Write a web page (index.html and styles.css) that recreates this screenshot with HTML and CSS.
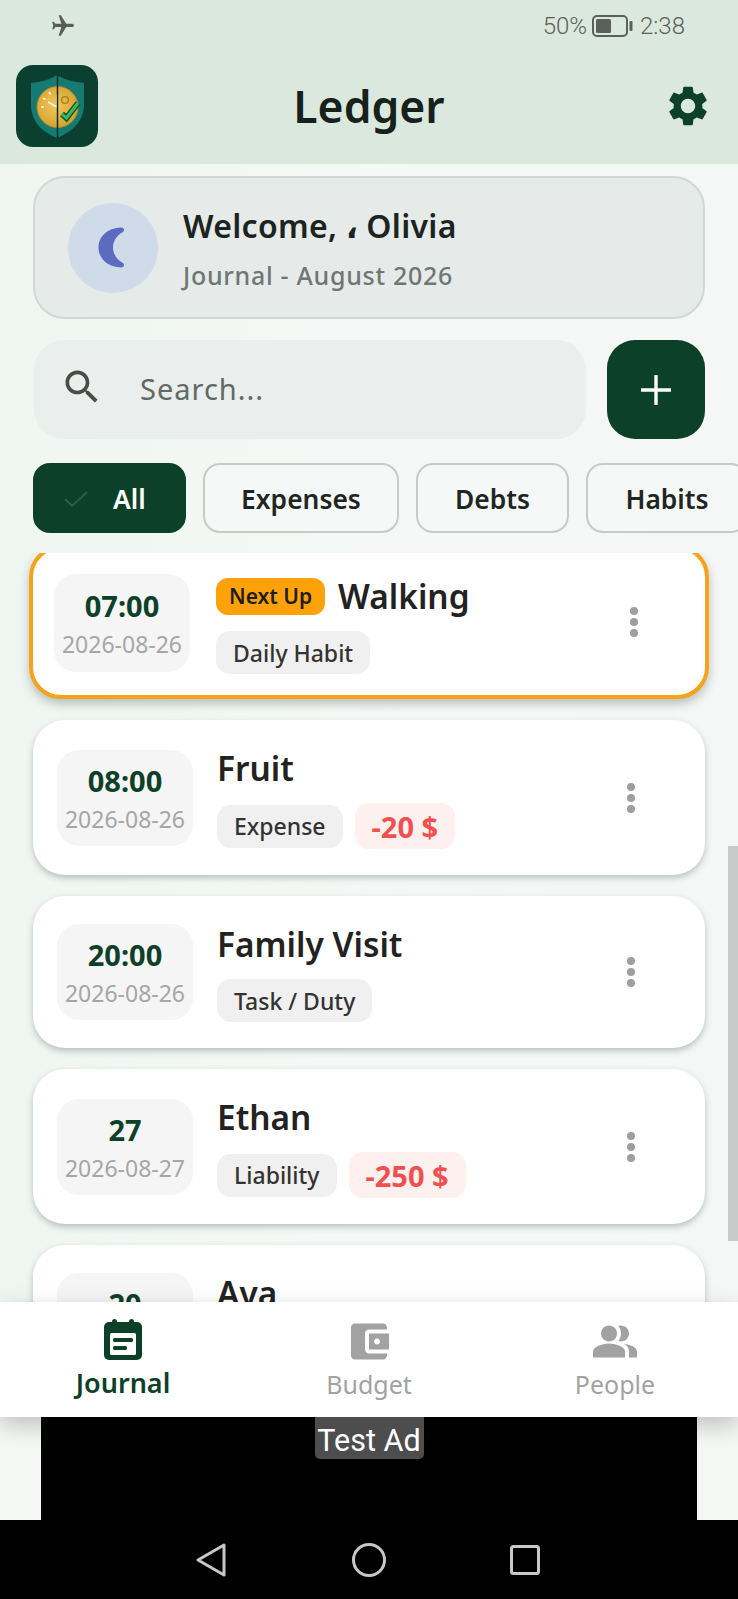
FILE: index.html
```html
<!DOCTYPE html>
<html lang="en">
<head>
<meta charset="utf-8">
<title>Ledger</title>
<link rel="stylesheet" href="styles.css">
</head>
<body>
<div class="app">
  <header class="top">
    <div class="status">
      <svg class="plane" viewBox="0 0 24 24"><path transform="rotate(90 12 12)" d="M21 16v-2l-8-5V3.5c0-.83-.67-1.5-1.5-1.5S10 2.67 10 3.5V9l-8 5v2l8-2.5V19l-2 1.5V22l3.5-1 3.5 1v-1.5L13 19v-5.5l8 2.5z"/></svg>
      <div class="status-right">
        <span>50%</span>
        <svg class="battery" viewBox="0 0 41 22"><rect x="1" y="1" width="34" height="20" rx="4" fill="none" stroke="#5b605c" stroke-width="2"/><rect x="4" y="4" width="15" height="14" rx="1.5" fill="#5b605c"/><rect x="37.5" y="6" width="3" height="10" rx="1" fill="#5b605c"/></svg>
        <span class="clock">2:38</span>
      </div>
    </div>
    <div class="appbar">
      <svg class="logo" viewBox="0 0 82 82">
        <defs>
          <radialGradient id="gold" cx="0.45" cy="0.45" r="0.6"><stop offset="0" stop-color="#f0c85a"/><stop offset="1" stop-color="#d39f2e"/></radialGradient>
        </defs>
        <rect width="82" height="82" rx="17" fill="#0b4030"/>
        <path d="M41 10 C49 15 58 17 68 18 V40 C68 56 56 67 41 73 C26 67 15 56 15 40 V18 C25 17 33 15 41 10 Z" fill="#147a72"/>
        <circle cx="41.5" cy="42" r="20.5" fill="url(#gold)" stroke="#b98a25" stroke-width="1"/>
        <path d="M32 37 L41 42 M25 42 h3 M27 33 l2.500 1.500 M33 27 l1.500 2.500" fill="none" stroke="#fff7df" stroke-width="1.500"/>
        <path d="M41 42 V30" fill="none" stroke="#fff7df" stroke-width="1"/>
        <circle cx="49" cy="35" r="3.400" fill="none" stroke="#a97d1a" stroke-width="1.400"/>
        <path d="M41.500 10 V73" stroke="#0a2d26" stroke-width="1.500"/>
        <path d="M46 49 L50.500 53 L62 38" fill="none" stroke="#0c5a34" stroke-width="6"/>
        <path d="M46 49 L50.500 53 L62 38" fill="none" stroke="#46b45a" stroke-width="3"/>
      </svg>
      <h1 class="title">Ledger</h1>
      <svg class="gear" viewBox="0 0 24 24"><path d="M19.14 12.94c.04-.3.06-.61.06-.94 0-.32-.02-.64-.07-.94l2.03-1.58c.18-.14.23-.41.12-.61l-1.92-3.32c-.12-.22-.37-.29-.59-.22l-2.39.96c-.5-.38-1.03-.7-1.62-.94l-.36-2.54c-.04-.24-.24-.41-.48-.41h-3.84c-.24 0-.43.17-.47.41l-.36 2.54c-.59.24-1.13.57-1.62.94l-2.39-.96c-.22-.08-.47 0-.59.22L2.74 8.87c-.12.21-.08.47.12.61l2.03 1.58c-.05.3-.09.63-.09.94s.02.64.07.94l-2.03 1.58c-.18.14-.23.41-.12.61l1.92 3.32c.12.22.37.29.59.22l2.39-.96c.5.38 1.03.7 1.62.94l.36 2.54c.05.24.24.41.48.41h3.84c.24 0 .44-.17.47-.41l.36-2.54c.59-.24 1.13-.56 1.62-.94l2.39.96c.22.08.47 0 .59-.22l1.92-3.32c.12-.22.07-.47-.12-.61l-2.01-1.58zM12 15.6c-1.98 0-3.6-1.62-3.6-3.6s1.62-3.6 3.6-3.6 3.6 1.62 3.6 3.6-1.62 3.6-3.6 3.6z"/></svg>
    </div>
  </header>

  <main class="main">
    <section class="welcome">
      <div class="avatar">
        <svg class="moon" viewBox="0 0 27 41"><path d="M23 .5 C9 1 .5 10 .5 20.500 C.5 31 9 40 23 40.500 C26 40.500 27 37.500 25 36 C19 33 15 27 15 20.500 C15 14 19 8 25 5 C27 3.500 26 .5 23 .5 Z"/></svg>
      </div>
      <div class="welcome-text">
        <div class="hello">Welcome, ، Olivia</div>
        <div class="period">Journal - August 2026</div>
      </div>
    </section>

    <section class="searchrow">
      <div class="search">
        <svg class="search-icon" viewBox="0 0 24 24"><path d="M15.5 14h-.79l-.28-.27C15.41 12.59 16 11.11 16 9.5 16 5.91 13.09 3 9.5 3S3 5.91 3 9.5 5.91 16 9.5 16c1.61 0 3.09-.59 4.23-1.57l.27.28v.79l5 4.99L20.49 19l-4.99-5zm-6 0C7.01 14 5 11.99 5 9.5S7.01 5 9.5 5 14 7.01 14 9.5 11.99 14 9.5 14z"/></svg>
        <span class="search-text">Search...</span>
      </div>
      <div class="add">
        <svg class="plus" viewBox="0 0 32 32"><path d="M16 1 V31 M1 16 H31" stroke="#fff" stroke-width="3.4"/></svg>
      </div>
    </section>

    <nav class="chips">
      <div class="chip chip-on">
        <svg class="tick" viewBox="0 0 24 16"><path d="M1 8 L8 15 L23 1" fill="none" stroke="#2f5c47" stroke-width="2"/></svg>
        <span>All</span>
      </div>
      <div class="chip chip-exp">Expenses</div>
      <div class="chip chip-debt">Debts</div>
      <div class="chip chip-hab">Habits</div>
    </nav>

    <section class="list">
      <article class="card card-next">
        <div class="when when-next"><div class="hour">07:00</div><div class="date">2026-08-26</div></div>
        <div class="info">
          <div class="name-row"><span class="badge">Next Up</span><span class="name">Walking</span></div>
          <div class="tags"><span class="tag">Daily Habit</span></div>
        </div>
        <div class="dots dots-next"><i></i><i></i><i></i></div>
      </article>

      <article class="card">
        <div class="when"><div class="hour">08:00</div><div class="date">2026-08-26</div></div>
        <div class="info">
          <div class="name-row"><span class="name">Fruit</span></div>
          <div class="tags"><span class="tag">Expense</span><span class="amount">-20 $</span></div>
        </div>
        <div class="dots"><i></i><i></i><i></i></div>
      </article>

      <article class="card">
        <div class="when"><div class="hour">20:00</div><div class="date">2026-08-26</div></div>
        <div class="info">
          <div class="name-row"><span class="name">Family Visit</span></div>
          <div class="tags"><span class="tag">Task / Duty</span></div>
        </div>
        <div class="dots"><i></i><i></i><i></i></div>
      </article>

      <article class="card">
        <div class="when"><div class="hour">27</div><div class="date">2026-08-27</div></div>
        <div class="info">
          <div class="name-row"><span class="name">Ethan</span></div>
          <div class="tags"><span class="tag">Liability</span><span class="amount">-250 $</span></div>
        </div>
        <div class="dots"><i></i><i></i><i></i></div>
      </article>

      <article class="card">
        <div class="when"><div class="hour">20</div><div class="date">2026-08-27</div></div>
        <div class="info">
          <div class="name-row"><span class="name">Ava</span></div>
          <div class="tags"><span class="tag">Contact</span></div>
        </div>
        <div class="dots"><i></i><i></i><i></i></div>
      </article>
    </section>
    <div class="scrollbar"></div>
  </main>

  <nav class="tabs">
    <div class="tab tab-on">
      <svg class="tab-icon tab-cal" viewBox="0 0 38 41"><rect x="8" y="0" width="5" height="8" rx="2.5" fill="#0d4029"/><rect x="25" y="0" width="5" height="8" rx="2.5" fill="#0d4029"/><rect x="0" y="3" width="38" height="38" rx="5" fill="#0d4029"/><rect x="6" y="14" width="26" height="22" rx="1.5" fill="#fff"/><rect x="9" y="19" width="20" height="4" rx="1.5" fill="#0d4029"/><rect x="9" y="27" width="14" height="4" rx="1.5" fill="#0d4029"/></svg>
      <span>Journal</span>
    </div>
    <div class="tab">
      <svg class="tab-icon" viewBox="2 2 20 20"><path d="M21 18v1c0 1.1-.9 2-2 2H5c-1.11 0-2-.9-2-2V5c0-1.1.89-2 2-2h14c1.1 0 2 .9 2 2v1h-9c-1.11 0-2 .9-2 2v8c0 1.1.89 2 2 2h9zm-9-2h10V8H12v8zm4-2.5c-.83 0-1.5-.67-1.5-1.5s.67-1.5 1.5-1.5 1.5.67 1.5 1.5-.67 1.5-1.5 1.5z"/></svg>
      <span>Budget</span>
    </div>
    <div class="tab">
      <svg class="tab-icon tab-people" viewBox="0 2 24 20"><path d="M16.67 13.13C18.04 14.06 19 15.32 19 17v3h4v-3c0-2.18-3.57-3.47-6.33-3.87z"/><path d="M15 12c2.21 0 4-1.79 4-4s-1.79-4-4-4c-.47 0-.91.1-1.33.24C14.5 5.27 15 6.58 15 8s-.5 2.73-1.33 3.76c.42.14.86.24 1.33.24z"/><path d="M9 12c2.21 0 4-1.79 4-4s-1.79-4-4-4-4 1.79-4 4 1.79 4 4 4z"/><path d="M9 13c-2.67 0-8 1.34-8 4v3h16v-3c0-2.66-5.33-4-8-4z"/></svg>
      <span>People</span>
    </div>
  </nav>

  <div class="adrow">
    <div class="ad"><span class="ad-label">Test Ad</span></div>
  </div>

  <footer class="sysnav">
    <svg class="sys-back" viewBox="0 0 30 34"><path d="M28 2 L2 17 L28 32 Z" fill="none" stroke="#c8c8c8" stroke-width="3" stroke-linejoin="round"/></svg>
    <svg class="sys-home" viewBox="0 0 34 34"><circle cx="17" cy="17" r="15.5" fill="none" stroke="#c8c8c8" stroke-width="3"/></svg>
    <svg class="sys-recent" viewBox="0 0 30 30"><rect x="1.5" y="1.5" width="27" height="27" rx="2" fill="none" stroke="#c8c8c8" stroke-width="3"/></svg>
  </footer>
</div>
</body>
</html>
```
FILE: styles.css
```css
* { box-sizing: border-box; }
html, body { margin: 0; padding: 0; }
body { width: 738px; height: 1599px; overflow: hidden; font-family: "Noto Sans", "DejaVu Sans", sans-serif; }
.app { width: 738px; height: 1599px; display: flex; flex-direction: column; background: linear-gradient(90deg, #eff6f2 0, #f5f8f6 50%, #f4f7f5 100%); position: relative; overflow: hidden; }

.top { height: 164px; background: #dbe8de; flex: none; }
.status { height: 52px; display: flex; align-items: center; justify-content: space-between; padding: 0 53px 0 50px; color: #5b605c; font-family: Roboto, sans-serif; font-size: 24px; font-weight: 300; }
.plane { width: 26px; height: 26px; fill: #575c58; }
.status-right { display: flex; align-items: center; gap: 5px; }
.clock { margin-left: 2px; }
.battery { width: 41px; height: 22px; }
.appbar { display: flex; align-items: center; justify-content: space-between; padding: 13px 26px 0 16px; position: relative; }
.logo { width: 82px; height: 82px; flex: none; }
.title { margin: 0; font-size: 44.5px; line-height: 60px; font-weight: 600; color: #17211c; position: absolute; left: 0; right: 0; text-align: center; }
.gear { width: 48px; height: 48px; fill: #0d4029; flex: none; }

.main { flex: 1; min-height: 0; position: relative; display: flex; flex-direction: column; padding-top: 12px; }
.welcome { margin: 0 33px 0 33px; height: 143px; border: 2px solid #cfd8d4; border-radius: 32px; background: #e6ebe9; display: flex; align-items: center; padding-left: 33px; flex: none; }
.avatar { width: 90px; height: 90px; border-radius: 50%; background: #cfdbe8; display: flex; align-items: center; justify-content: center; flex: none; }
.moon { width: 27px; height: 41px; fill: #5c6bc0; margin-right: 4px; }
.welcome-text { margin-left: 25px; }
.hello { font-size: 32px; line-height: 44px; font-weight: 600; color: #1b2420; letter-spacing: .3px; }
.period { font-size: 25px; line-height: 32px; margin-top: 11px; font-weight: 500; color: #6f7673; letter-spacing: .7px; }

.searchrow { display: flex; gap: 21px; margin: 21px 33px 0 34px; flex: none; }
.search { flex: 1; height: 99px; border-radius: 30px; background: #eaeeec; display: flex; align-items: center; padding: 0 0 2px 59px; position: relative; }
.search-icon { width: 44px; height: 44px; fill: #484d4a; position: absolute; left: 26px; top: 25px; }
.search-text { font-size: 29px; letter-spacing: 1px; color: #626866; margin-left: 47px; }
.add { width: 98px; height: 99px; border-radius: 28px; background: #0d4029; display: flex; align-items: center; justify-content: center; flex: none; }
.plus { width: 32px; height: 32px; }

.chips { display: flex; gap: 17px; margin: 24px 0 0 33px; height: 70px; flex: none; white-space: nowrap; }
.chip { height: 70px; border: 2px solid #c5ccc8; border-radius: 17px; background: #f6f8f7; display: flex; align-items: center; justify-content: center; padding-top: 2px; font-size: 26.4px; font-weight: 600; color: #1f2522; flex: none; }
.chip-on { width: 153px; background: #0d4029; border-color: #0d4029; color: #fff; gap: 25px; padding-left: 29px; justify-content: flex-start; }
.tick { width: 24px; height: 16px; }
.chip-exp { width: 196px; }
.chip-debt { width: 153px; }
.chip-hab { width: 162px; }

.list { flex: 1; min-height: 0; overflow: hidden; margin-top: 20px; display: flex; flex-direction: column; gap: 21px; padding: 0 33px; }
.card { flex: none; background: #fff; border-radius: 32px; padding: 26px 24px; display: flex; align-items: center; box-shadow: 0 3px 6px rgba(60, 80, 70, .32); }
.card-next { margin: -8px -4px 0 -4px; border: 4px solid #f7a21b; padding: 25px 21px 21px; box-shadow: 0 5px 10px rgba(60, 80, 70, .32); }
.when { width: 136px; height: 96px; flex: none; border-radius: 22px; background: #f5f5f5; display: flex; flex-direction: column; align-items: center; justify-content: center; margin-right: 24px; }
.when-next { height: 98px; margin: 0 26px 2px 0; }
.hour { font-size: 29px; line-height: 34px; font-weight: 700; color: #0d4029; }
.date { font-size: 23px; line-height: 26px; margin-top: 8px; color: #a6a6a6; }
.info { flex: 1; min-width: 0; }
.name-row { display: flex; align-items: center; gap: 13px; height: 44px; }
.name { font-size: 33.4px; line-height: 44px; font-weight: 600; color: #222; }
.badge { height: 37px; padding: 0 13px; border-radius: 12px; background: #ffa20a; display: flex; align-items: center; font-size: 21px; font-weight: 600; color: #1d1d1d; }
.tags { display: flex; align-items: center; gap: 12px; margin-top: 13px; }
.tag { height: 43px; padding: 0 17px; border-radius: 14px; background: #f0f0f0; display: flex; align-items: center; font-size: 23px; font-weight: 500; color: #333; }
.amount { height: 46px; padding: 0 17px; border-radius: 14px; background: #fff0f0; display: flex; align-items: center; font-size: 29px; font-weight: 700; color: #f05050; }
.dots { width: 16px; margin: 0 42px 0 0; display: flex; flex-direction: column; align-items: center; gap: 3px; flex: none; }
.dots-next { margin-bottom: 4px; }
.dots i { display: block; width: 8px; height: 8px; border-radius: 50%; background: #9e9e9e; }

.scrollbar { position: absolute; right: 0; top: 682px; width: 10px; height: 395px; background: #c6cac8; }

.tabs { height: 115px; flex: none; display: grid; grid-template-columns: repeat(3, 1fr); background: #fff; box-shadow: 0 8px 22px rgba(0, 0, 0, .22); position: relative; z-index: 1; }
.tab { display: flex; flex-direction: column; align-items: center; padding-top: 19px; font-size: 25px; line-height: 34px; color: #a2a2a2; }
.tab-icon { width: 40px; height: 41px; fill: #a2a2a2; margin-bottom: 5px; }
.tab-people { width: 48px; }
.tab-on { color: #0d4029; font-weight: 600; font-size: 27px; padding-top: 17px; }
.tab-cal { width: 38px; margin-bottom: 6px; }

.adrow { height: 103px; flex: none; display: flex; justify-content: center; background: #f5f7f5; }
.ad { width: 656px; background: #000; display: flex; justify-content: center; align-items: flex-start; position: relative; z-index: 2; }
.ad-label { height: 42px; width: 109px; padding-top: 4px; display: flex; align-items: center; justify-content: center; background: #4d4d4d; color: #fff; font-family: Roboto, sans-serif; font-size: 30.5px; border-radius: 0 0 5px 5px; }

.sysnav { height: 79px; flex: none; background: #000; display: flex; align-items: center; position: relative; z-index: 2; padding-left: 196px; }
.sys-back { width: 30px; height: 34px; }
.sys-home { width: 34px; height: 34px; margin-left: 126px; }
.sys-recent { width: 30px; height: 30px; margin-left: 124px; }
```
